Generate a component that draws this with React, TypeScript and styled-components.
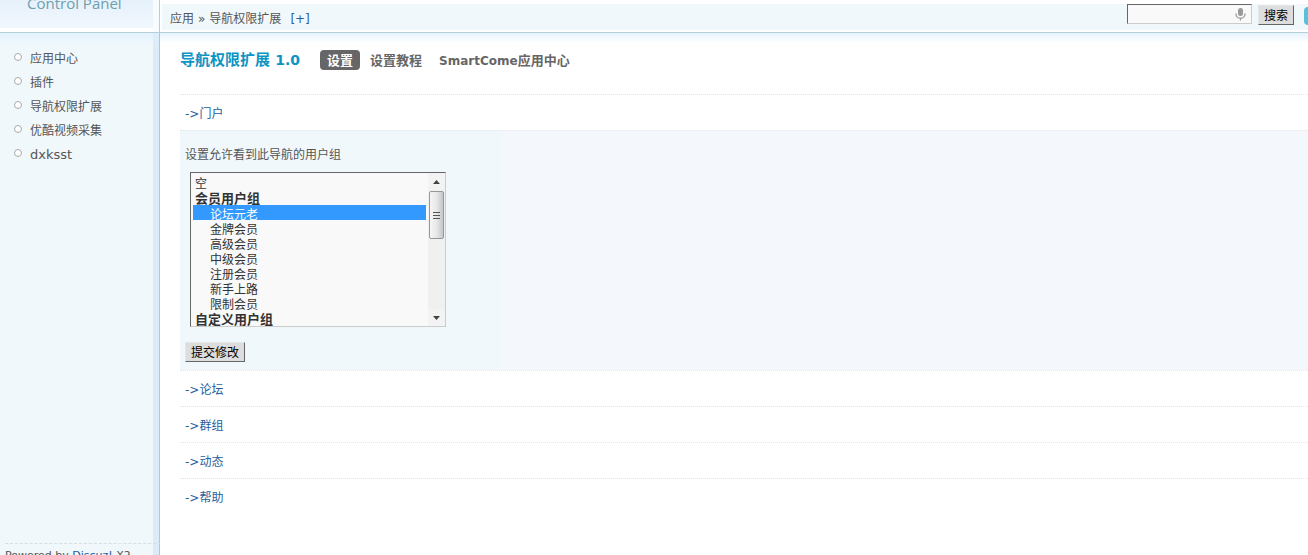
import React, { useRef } from 'react';
import styled, { createGlobalStyle } from 'styled-components';

const GlobalStyle = createGlobalStyle`
  *, *::before { box-sizing: border-box; }
  html, body { margin: 0; background: #fff; }
  body {
    overflow: hidden;
    color: #555;
    font: 12px/18px "DejaVu Sans", "Noto Sans CJK SC", sans-serif;
  }
  a { color: #26609c; text-decoration: none; }
  ul { list-style: none; margin: 0; padding: 0; }
`;

const Page = styled.div`
  display: grid;
  grid-template-columns: 160px minmax(0, 1fr);
  grid-template-rows: 33px minmax(0, 1fr);
  height: 100vh;
`;

const Brand = styled.div`
  height: 33px;
  padding-left: 27px;
  overflow: hidden;
  border-right: 1px solid #b5cfd9;
  border-bottom: 1px solid #b5cfd9;
  background: linear-gradient(#e6f1fb, #f1f7fd 28px, #fff 28px) left / 153px 100% no-repeat, #f9fcfe;
  color: #6f9fae;
  font: 15px/6px "Open Sans", sans-serif;
`;

const TopBar = styled.header`
  display: flex;
  justify-content: space-between;
  height: 33px;
  padding: 4px 0 2px 2px;
  overflow: hidden;
  border-bottom: 1px solid #b5cfd9;
`;

const Crumbs = styled.nav`
  display: flex;
  flex: 1;
  gap: 4px;
  height: 26px;
  padding: 1px 0 0 8px;
  background: #f0f8fc;
  line-height: 28px;
  white-space: nowrap;
`;

const AddLink = styled.a`
  margin-left: 5px;
`;

const Search = styled.form`
  display: flex;
  align-items: flex-start;
  height: 26px;
  background: #f0f8fc;
`;

const SearchBox = styled.div`
  display: flex;
  align-items: center;
  width: 125px;
  height: 20px;
  padding-right: 5px;
  border: 1px solid;
  border-color: #666 #ccc #ccc #666;
  background: #f9f9f9;
`;

const SearchInput = styled.input`
  flex: 1;
  min-width: 0;
  height: 18px;
  padding: 2px;
  border: 0;
  outline: 0;
  background: transparent;
  font: inherit;
`;

const Button = styled.button`
  height: 20px;
  padding: 1px 5px 0;
  border: 1px solid;
  border-color: #e6e6e6 #666 #666 #e6e6e6;
  background: #ddd;
  color: #000;
  font: inherit;
  line-height: 18px;
  white-space: nowrap;
`;

const SearchButton = styled(Button)`
  margin: 1px 10px 0 6px;
`;

const MapButton = styled.button`
  width: 4px;
  height: 18px;
  margin-top: 3px;
  padding: 0;
  border: 0;
  border-radius: 4px 0 0 4px;
  background: #5bbfd9;
`;

const Sidebar = styled.aside`
  display: flex;
  flex-direction: column;
  min-height: 0;
  border-right: 1px solid #a9cade;
  background:
    linear-gradient(rgba(222, 240, 252, 0.8), rgba(222, 240, 252, 0) 12px),
    linear-gradient(90deg, transparent calc(100% - 6px), #dcebf8 calc(100% - 6px)),
    #f0f8fc;
`;

const Menu = styled.ul`
  padding: 14px 0 0 14px;
`;

const MenuItem = styled.li`
  display: flex;
  align-items: center;
  gap: 8px;
  height: 24px;

  &::before {
    content: "";
    width: 8px;
    height: 8px;
    margin-bottom: 4px;
    border: 1px solid #aaa;
    border-radius: 50%;
    background: #fff;
  }
`;

const MenuLink = styled.a<{ $latin?: boolean }>`
  color: #555;
  font-size: ${({ $latin }) => ($latin ? 13 : 12)}px;
`;

const Footer = styled.footer`
  height: 12px;
  margin: auto -2px 0 5px;
  overflow: hidden;
  border-top: 1px dashed #d5dee2;
  font-size: 11px;
  line-height: 24px;
  white-space: nowrap;
`;

const Main = styled.main`
  min-width: 0;
  padding: 16px 0 0 20px;
  background: linear-gradient(#e6f3fd, #fff 10px);
`;

const TitleBar = styled.div`
  display: flex;
  align-items: center;
  height: 22px;
  margin-bottom: 23px;
`;

const Title = styled.h1`
  margin: 0 20px 0 0;
  color: #0b94c4;
  font-size: 15px;
  line-height: 20px;
  white-space: nowrap;
`;

const Latin = styled.span<{ $size: number }>`
  font-size: ${({ $size }) => $size}px;
`;

const Tabs = styled.nav`
  display: flex;
  gap: 3px;
`;

const Tab = styled.a<{ $active?: boolean }>`
  height: 20px;
  padding: 1px 7px 0;
  border-radius: 4px;
  background: ${({ $active }) => ($active ? '#666' : 'transparent')};
  color: ${({ $active }) => ($active ? '#fff' : '#666')};
  font-size: 13px;
  font-weight: bold;
  line-height: 20px;
  white-space: nowrap;
`;

const SectionRow = styled.div`
  height: 36px;
  padding: 1px 5px 0;
  border-top: 1px dotted #dbe8ef;
  line-height: 36px;
`;

const Panel = styled.form`
  height: 240px;
  padding: 15px 5px 0;
  background: linear-gradient(90deg, #f0f8fc 321px, #f4f8fd 321px);
  border-top: 1px dotted #dbe8ef;
`;

const Label = styled.label`
  display: block;
  height: 18px;
  margin-bottom: 8px;
`;

const ListFrame = styled.div`
  display: flex;
  width: 256px;
  height: 155px;
  margin: 0 0 15px 5px;
  border: 1px solid;
  border-color: #666 #ccc #ccc #666;
  background: #f9f9f9;
`;

const GroupList = styled.select`
  flex: 1;
  min-width: 0;
  height: 153px;
  padding: 1px 2px;
  border: 0;
  border-radius: 0;
  outline: 0;
  background: transparent;
  color: #333;
  font: inherit;
  scrollbar-width: none;

  option {
    height: 15px;
    min-height: 15px;
    padding: 0 2px;
    color: #333;
    font-size: 12px;
    line-height: 15px;
  }
  optgroup {
    margin-top: -1px;
    padding: 0;
    font-size: 13px;
    font-weight: bold;
    line-height: 13px;
  }
  optgroup option {
    padding: 0 17px;
    font-weight: normal;
  }
  optgroup option:first-of-type { margin-top: -3px; }
  optgroup option::before { content: none; }
  option:checked {
    background: linear-gradient(#39f, #39f);
    color: #fff;
  }
`;

const ScrollRail = styled.div`
  display: flex;
  flex-direction: column;
  width: 17px;
  background: #f0f0f0;
`;

const ScrollButton = styled.button`
  display: flex;
  align-items: center;
  justify-content: center;
  height: 17px;
  padding: 0;
  border: 0;
  background: #f3f3f3;
`;

const Thumb = styled.div`
  display: flex;
  flex-direction: column;
  align-items: center;
  justify-content: center;
  gap: 1px;
  width: 15px;
  height: 48px;
  margin: 1px 1px auto;
  border: 1px solid #979797;
  border-radius: 2px;
  background: linear-gradient(90deg, #f6f6f6, #e8e8e8 50%, #c4c6ca);
`;

const Grip = styled.span`
  width: 7px;
  height: 2px;
  border-bottom: 1px solid #555;
`;

const groups = [
  { label: '会员用户组', items: ['论坛元老', '金牌会员', '高级会员', '中级会员', '注册会员', '新手上路', '限制会员'] },
  { label: '自定义用户组', items: [] as string[] },
];

const menu = ['应用中心', '插件', '导航权限扩展', '优酷视频采集', 'dxksst'];
const sections = ['论坛', '群组', '动态', '帮助'];

function Microphone() {
  return (
    <svg width="11" height="13" viewBox="0 0 11 13" aria-hidden="true">
      <rect x="3" y="0" width="5" height="8" rx="2.5" fill="#999" />
      <path d="M1 5.5v.7a4.5 4 0 0 0 9 0v-.7M5.5 10v2.5" fill="none" stroke="#999" strokeWidth="1.3" />
    </svg>
  );
}

export default function App() {
  const list = useRef<HTMLSelectElement>(null);
  const scroll = (top: number) => list.current?.scrollBy({ top });

  return (
    <>
      <GlobalStyle />
      <Page>
        <Brand>Control Panel</Brand>
        <TopBar>
          <Crumbs>
            <span>应用</span>
            <span>»</span>
            <span>导航权限扩展</span>
            <AddLink href="#add">[+]</AddLink>
          </Crumbs>
          <Search>
            <SearchBox>
              <SearchInput type="text" aria-label="搜索" />
              <Microphone />
            </SearchBox>
            <SearchButton type="button">搜索</SearchButton>
            <MapButton type="button" aria-label="MAP" />
          </Search>
        </TopBar>
        <Sidebar>
          <Menu>
            {menu.map((name) => (
              <MenuItem key={name}>
                <MenuLink href="#menu" $latin={name === 'dxksst'}>{name}</MenuLink>
              </MenuItem>
            ))}
          </Menu>
          <Footer>Powered by <a href="#discuz">Discuz!</a> X2</Footer>
        </Sidebar>
        <Main>
          <TitleBar>
            <Title>导航权限扩展 <Latin $size={14}>1.0</Latin></Title>
            <Tabs>
              <Tab href="#settings" $active>设置</Tab>
              <Tab href="#guide">设置教程</Tab>
              <Tab href="#center"><Latin $size={12}>SmartCome</Latin>应用中心</Tab>
            </Tabs>
          </TitleBar>
          <SectionRow><a href="#portal">-&gt;门户</a></SectionRow>
          <Panel>
            <Label htmlFor="groups">设置允许看到此导航的用户组</Label>
            <ListFrame>
              <GroupList id="groups" ref={list} multiple size={10} defaultValue={['论坛元老']}>
                <option value="">空</option>
                {groups.map((group) => (
                  <optgroup key={group.label} label={group.label}>
                    {group.items.map((item) => <option key={item} value={item}>{item}</option>)}
                  </optgroup>
                ))}
              </GroupList>
              <ScrollRail>
                <ScrollButton type="button" aria-label="向上" onClick={() => scroll(-15)}>
                  <svg width="7" height="4" viewBox="0 0 7 4"><path d="M0 4 3.5 0 7 4z" fill="#444" /></svg>
                </ScrollButton>
                <Thumb><Grip /><Grip /><Grip /></Thumb>
                <ScrollButton type="button" aria-label="向下" onClick={() => scroll(15)}>
                  <svg width="7" height="4" viewBox="0 0 7 4"><path d="M0 0 3.5 4 7 0z" fill="#444" /></svg>
                </ScrollButton>
              </ScrollRail>
            </ListFrame>
            <Button type="button">提交修改</Button>
          </Panel>
          {sections.map((name) => (
            <SectionRow key={name}><a href="#section">-&gt;{name}</a></SectionRow>
          ))}
        </Main>
      </Page>
    </>
  );
}
